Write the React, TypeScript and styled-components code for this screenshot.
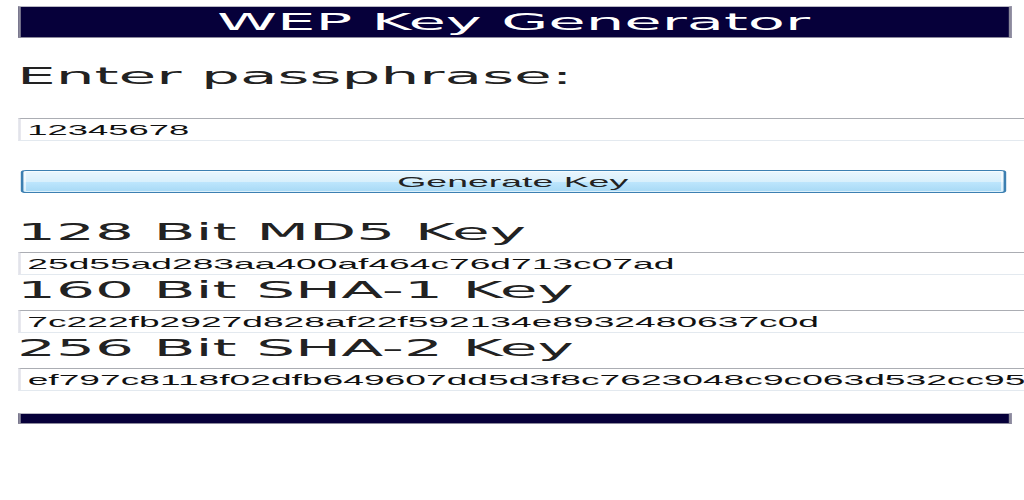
import React from 'react';
import styled, { createGlobalStyle } from 'styled-components';

// the whole page is drawn narrow and stretched sideways, like the screenshot
const STRETCH = 2.6;

const navy = '#06003a';
const ink = '#222222';

const GlobalStyle = createGlobalStyle`
  html, body {
    margin: 0;
    padding: 0;
    overflow: hidden;
    background: #ffffff;
  }
`;

const Page = styled.div`
  width: ${1024 / STRETCH}px;
  box-sizing: border-box;
  padding: 6px 0 0 6.5px;
  transform: scaleX(${STRETCH});
  transform-origin: 0 0;
  font-family: 'DejaVu Sans', Verdana, sans-serif;
  color: ${ink};
`;

const Banner = styled.div<{ $height: number }>`
  box-sizing: border-box;
  width: 382px;
  height: ${(p) => p.$height}px;
  background: ${navy};
  border: 1px solid #8c8a9c;
  border-top-color: #b9b8c4;
  color: #ffffff;
  font-size: 23.4px;
  line-height: ${(p) => p.$height - 2}px;
  text-align: center;
  white-space: nowrap;
`;

const Heading = styled.div<{ $top: number }>`
  margin-top: ${(p) => p.$top}px;
  height: 28px;
  font-size: 23.6px;
  line-height: 28px;
  white-space: nowrap;
`;

const Field = styled.input<{ $top: number, $size: number }>`
  display: block;
  box-sizing: border-box;
  width: 392px;
  height: 23px;
  margin: ${(p) => p.$top}px 0 0 0;
  padding: 0 3px;
  border: 1px solid #dfe3ea;
  border-top-color: #abadb3;
  border-left-color: #e2e3ea;
  border-bottom-color: #e3e9ef;
  border-radius: 0;
  background: #ffffff;
  font-family: 'Liberation Sans', Arial, sans-serif;
  font-size: ${(p) => p.$size}px;
  color: #111111;
  outline: none;
`;

const GenerateButton = styled.button`
  display: block;
  box-sizing: border-box;
  width: 379px;
  height: 23px;
  margin: 29px 0 0 1.2px;
  padding: 0;
  border: 1px solid #3c7fb1;
  border-radius: 2px;
  background: linear-gradient(to bottom, #eaf6fd 0%, #d9f0fc 50%, #bee6fd 51%, #a7d9f5 100%);
  box-shadow: inset 0 0 0 1px rgba(255, 255, 255, 0.6);
  font-family: 'Liberation Sans', Arial, sans-serif;
  font-size: 14.4px;
  color: ${ink};
  cursor: pointer;
`;

const Footer = styled(Banner)`
  margin-top: 22px;
`;

const keys = [
  { label: '128 Bit MD5 Key', value: '25d55ad283aa400af464c76d713c07ad' },
  { label: '160 Bit SHA-1 Key', value: '7c222fb2927d828af22f592134e8932480637c0d' },
  { label: '256 Bit SHA-2 Key', value: 'ef797c8118f02dfb649607dd5d3f8c7623048c9c063d532cc95c5ed7a898a64f' },
];

function KeyRow({ label, value, first }: { label: string, value: string, first: boolean }) {
  return (
    <>
      <Heading $top={first ? 25 : 1}>{label}</Heading>
      <Field $top={6} $size={14.3} value={value} readOnly />
    </>
  );
}

export default function App() {
  return (
    <>
      <GlobalStyle />
      <Page>
        <Banner $height={32}>WEP Key Generator</Banner>
        <Heading $top={24}>Enter passphrase:</Heading>
        <Field $top={28} $size={14} defaultValue="12345678" />
        <GenerateButton type="button">Generate Key</GenerateButton>
        {keys.map((k, i) => (
          <KeyRow key={k.label} label={k.label} value={k.value} first={i === 0} />
        ))}
        <Footer $height={11} />
      </Page>
    </>
  );
}
